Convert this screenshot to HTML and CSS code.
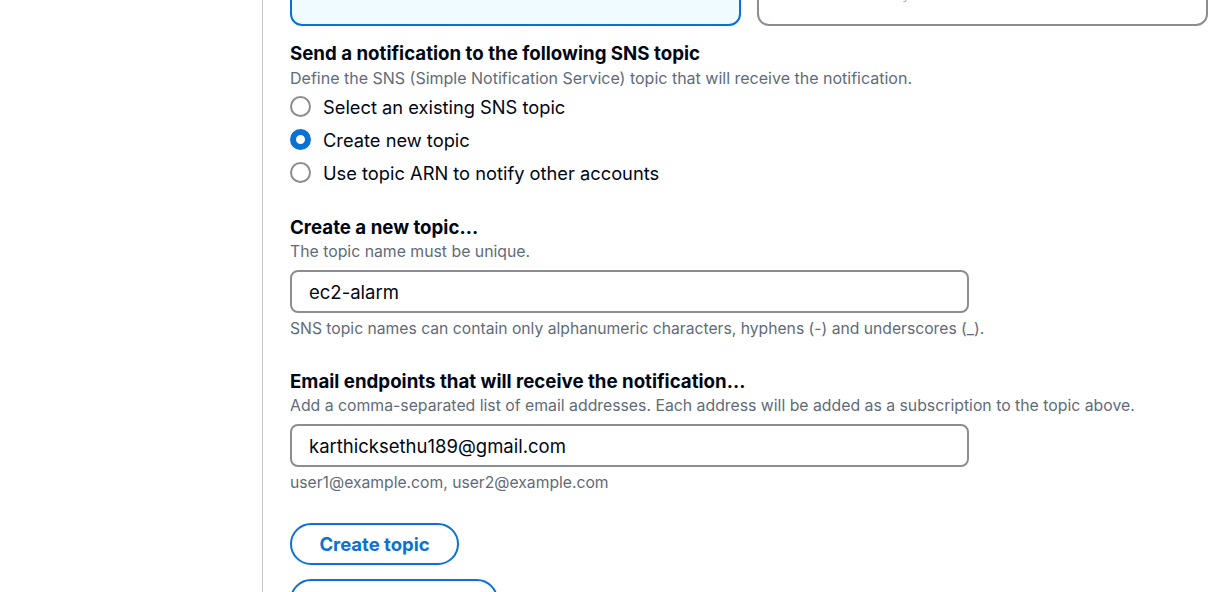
FILE: index.html
```html
<!DOCTYPE html>
<html lang="en">
<head>
<meta charset="utf-8">
<title>SNS notification</title>
<link rel="stylesheet" href="styles.css">
</head>
<body>
<div class="layout">
  <aside class="nav"></aside>
  <main class="content">
    <div class="tiles">
      <div class="tile tile-selected">
        <div class="tile-desc">In alarm state</div>
      </div>
      <div class="tile">
        <div class="tile-desc">OK state only</div>
      </div>
    </div>

    <section class="field field-first">
      <div class="label">Send a notification to the following SNS topic</div>
      <div class="desc">Define the SNS (Simple Notification Service) topic that will receive the notification.</div>
      <div class="radios">
        <label class="radio"><span class="dot"></span><span>Select an existing SNS topic</span></label>
        <label class="radio"><span class="dot dot-on"></span><span>Create new topic</span></label>
        <label class="radio"><span class="dot"></span><span>Use topic ARN to notify other accounts</span></label>
      </div>
    </section>

    <section class="field field-topic">
      <div class="label">Create a new topic...</div>
      <div class="desc">The topic name must be unique.</div>
      <div class="input">ec2-alarm</div>
      <div class="hint">SNS topic names can contain only alphanumeric characters, hyphens (-) and underscores (_).</div>
    </section>

    <section class="field field-email">
      <div class="label">Email endpoints that will receive the notification...</div>
      <div class="desc">Add a comma-separated list of email addresses. Each address will be added as a subscription to the topic above.</div>
      <div class="input">karthicksethu189@gmail.com</div>
      <div class="hint">user1@example.com, user2@example.com</div>
    </section>

    <div class="actions">
      <button class="btn">Create topic</button>
      <button class="btn btn-wide">Add notification</button>
    </div>
  </main>
</div>
</body>
</html>
```

FILE: styles.css
```css
* { box-sizing: border-box; }
html, body { margin: 0; padding: 0; background: #ffffff; }
body {
  font-family: Inter, "Open Sans", Arial, sans-serif;
  color: #000716;
  overflow: hidden;
  height: 592px;
}
.layout {
  display: flex;
  height: 592px;
}
.nav {
  width: 263px;
  flex: none;
  border-right: 1px solid #c6c6cd;
}
.content {
  flex: 1;
  padding: 0 15px 0 27px;
  display: flex;
  flex-direction: column;
}
.content > * { flex: none; }
.tiles {
  display: grid;
  grid-template-columns: 451px 451px;
  gap: 16px;
  margin-top: -54px;
  height: 80px;
}
.tile {
  border: 2px solid #8c8c94;
  border-radius: 12px;
  padding: 0 20px 20px 20px;
  background: #ffffff;
  display: flex;
  flex-direction: column;
  justify-content: flex-end;
  overflow: hidden;
}
.tile-selected {
  border-color: #0972d3;
  background: #f0fbff;
}
.tile-desc {
  font-size: 15.8px;
  line-height: 20px;
  color: #b4bcc6;
  white-space: nowrap;
  padding-left: 32px;
}
.field-first { margin-top: 16px; }
.field-topic { margin-top: 27px; }
.field-email { margin-top: 31px; }
.label {
  font-size: 18.7px;
  font-weight: 700;
  line-height: 24px;
  color: #000716;
}
.desc {
  font-size: 15.8px;
  line-height: 22px;
  color: #5f6b7a;
  margin-top: 1px;
}
.field-first .desc { font-size: 16px; }
.radios {
  margin-top: 1px;
  display: flex;
  flex-direction: column;
}
.radio {
  display: flex;
  align-items: center;
  gap: 12px;
  height: 33px;
  font-size: 18.3px;
  color: #000716;
}
.dot {
  width: 21px;
  height: 21px;
  border-radius: 50%;
  border: 2px solid #8c8c94;
  flex: none;
}
.dot-on {
  border: 6px solid #0972d3;
  background: #ffffff;
}
.input {
  margin-top: 7px;
  width: 679px;
  height: 43px;
  border: 2px solid #8c8c94;
  border-radius: 8px;
  padding: 0 17px;
  display: flex;
  align-items: center;
  font-size: 18.5px;
  color: #000716;
}
.hint {
  margin-top: 6px;
  font-size: 15.7px;
  line-height: 20px;
  color: #5f6b7a;
}
.actions {
  margin-top: 30px;
  display: flex;
  flex-direction: column;
  align-items: flex-start;
  gap: 14px;
}
.btn {
  font-family: inherit;
  height: 42px;
  padding: 0;
  border: 2px solid #0972d3;
  border-radius: 21px;
  background: #ffffff;
  color: #0972d3;
  font-size: 18.5px;
  font-weight: 700;
  width: 169px;
}
.btn-wide { width: 208px; }
```
